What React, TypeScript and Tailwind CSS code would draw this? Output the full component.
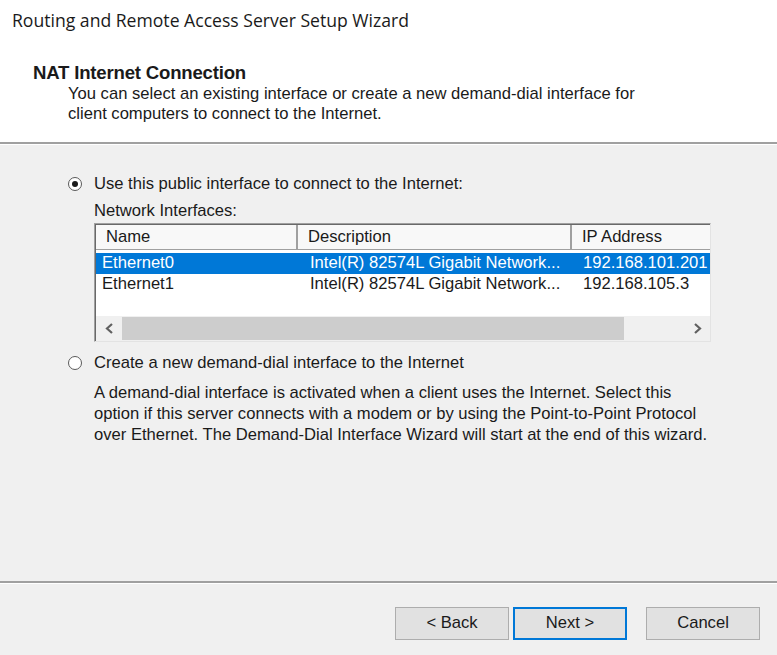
import React from 'react';

const rows = [
  { name: 'Ethernet0', desc: 'Intel(R) 82574L Gigabit Network...', ip: '192.168.101.201', selected: true },
  { name: 'Ethernet1', desc: 'Intel(R) 82574L Gigabit Network...', ip: '192.168.105.3', selected: false },
];

function Radio({ checked }: { checked?: boolean }) {
  return (
    <span className="w-[14px] h-[14px] rounded-full border border-[#5a5a5a] bg-white flex items-center justify-center shrink-0">
      {checked && <span className="w-[6px] h-[6px] rounded-full bg-[#1a1a1a]" />}
    </span>
  );
}

export default function App() {
  return (
    <div className="w-[777px] h-[655px] bg-[#f0f0f0] flex flex-col text-[#1a1a1a] overflow-hidden" style={{ fontFamily: '"Liberation Sans", Arial, sans-serif' }}>
      {/* Header */}
      <div className="bg-white h-[144px] border-b-2 border-[#a0a0a0] shrink-0">
        <div className="pl-[12px] pt-[9px] text-[17.6px] leading-[22px]" style={{ fontFamily: '"Open Sans", "Noto Sans", sans-serif' }}>
          Routing and Remote Access Server Setup Wizard
        </div>
        <div className="pl-[33px] pt-[31px] text-[18.6px] font-bold leading-[22px] tracking-[-0.2px]">NAT Internet Connection</div>
        <div className="pl-[68px] text-[16.6px] leading-[20px]">
          You can select an existing interface or create a new demand-dial interface for
          <br />
          client computers to connect to the Internet.
        </div>
      </div>
      <div className="h-px bg-white shrink-0" />

      {/* Body */}
      <div className="flex-1 pl-[68px] pt-[28px] text-[16.6px]">
        <div className="flex items-center gap-[12px] h-[22px]">
          <Radio checked />
          <span>Use this public interface to connect to the Internet:</span>
        </div>
        <div className="pl-[26px]">
          <div className="leading-[20px] mt-[6px]">Network Interfaces:</div>
          <div className="w-[617px] h-[119px] mt-[2px] border border-[#a0a0a0] border-r-[#e3e3e3] border-b-[#e3e3e3] bg-white flex flex-col">
            <div className="flex-1 border-l border-t border-[#696969] flex flex-col overflow-hidden">
              <div className="flex h-[25px] border-b border-[#a0a0a0] shrink-0 bg-[#f8f8f8]">
                <div className="w-[202px] pl-[10px] border-r-2 border-[#a0a0a0] flex items-center">Name</div>
                <div className="w-[274px] pl-[10px] border-r-2 border-[#a0a0a0] flex items-center">Description</div>
                <div className="flex-1 pl-[10px] flex items-center whitespace-nowrap">IP Address</div>
              </div>
              <div className="pt-[3px] flex-1">
                {rows.map((r) => (
                  <div
                    key={r.name}
                    className={`flex h-[21px] items-center whitespace-nowrap ${r.selected ? 'bg-[#0078d7] text-white' : ''}`}
                  >
                    <div className="w-[202px] pl-[6px]">{r.name}</div>
                    <div className="w-[274px] pl-[12px]">{r.desc}</div>
                    <div className="flex-1 pl-[11px] overflow-hidden">{r.ip}</div>
                  </div>
                ))}
              </div>
              {/* Horizontal scrollbar */}
              <div className="h-[25px] bg-[#f0f0f0] flex items-center shrink-0">
                <div className="w-[26px] flex justify-center">
                  <svg width="9" height="11" viewBox="0 0 9 11">
                    <path d="M7 1 L2 5.5 L7 10" fill="none" stroke="#606060" strokeWidth="2.2" />
                  </svg>
                </div>
                <div className="w-[502px] h-[23px] bg-[#cdcdcd]" />
                <div className="flex-1" />
                <div className="w-[26px] flex justify-center">
                  <svg width="9" height="11" viewBox="0 0 9 11">
                    <path d="M2 1 L7 5.5 L2 10" fill="none" stroke="#606060" strokeWidth="2.2" />
                  </svg>
                </div>
              </div>
            </div>
          </div>
        </div>

        <div className="flex items-center gap-[12px] h-[22px] mt-[10px]">
          <Radio />
          <span>Create a new demand-dial interface to the Internet</span>
        </div>
        <div className="pl-[26px] mt-[8px] leading-[21px]">
          A demand-dial interface is activated when a client uses the Internet. Select this
          <br />
          option if this server connects with a modem or by using the Point-to-Point Protocol
          <br />
          over Ethernet. The Demand-Dial Interface Wizard will start at the end of this wizard.
        </div>
      </div>

      {/* Footer */}
      <div className="h-[2px] bg-[#a0a0a0] shrink-0" />
      <div className="h-px bg-white shrink-0" />
      <div className="h-[71px] shrink-0 flex items-start justify-end pr-[17px] pt-[23px] gap-[4px] text-[16.6px]">
        <button className="w-[114px] h-[33px] bg-[#e1e1e1] border border-[#adadad]">&lt; Back</button>
        <button className="w-[114px] h-[33px] bg-[#e1e1e1] border-2 border-[#0078d7]">Next &gt;</button>
        <button className="w-[114px] h-[33px] bg-[#e1e1e1] border border-[#adadad] ml-[15px]">Cancel</button>
      </div>
    </div>
  );
}
